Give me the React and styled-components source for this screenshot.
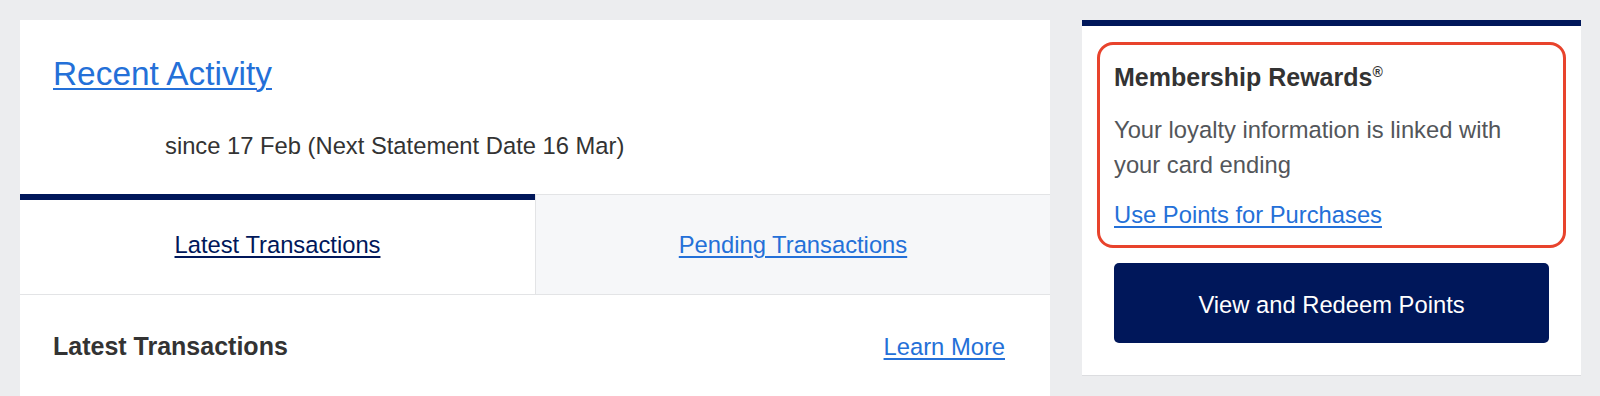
import React from "react";
import styled, { createGlobalStyle } from "styled-components";

const NAVY = "#00175a";
const LINK = "#2470d8";
const BORDER = "#e3e4e6";

const Global = createGlobalStyle`
  html, body { margin: 0; padding: 0; background: #ecedef; overflow: hidden; }
  body { font-family: "Liberation Sans", Arial, "Helvetica Neue", sans-serif; }
  * { box-sizing: border-box; }
`;

const Page = styled.div`
  display: grid;
  grid-template-columns: 1030px 499px;
  column-gap: 32px;
  padding: 20px 19px 0 20px;
  height: 100vh;
  overflow: hidden;
`;

const MainPanel = styled.section`
  background: #ffffff;
  align-self: stretch;
`;

const Header = styled.div`
  padding: 34px 33px 32px;
`;

const TitleLink = styled.a`
  display: inline-block;
  font-size: 33.4px;
  line-height: 40px;
  color: ${LINK};
  text-decoration: underline;
  text-decoration-thickness: 1.5px;
  text-underline-offset: 3px;
  cursor: pointer;
`;

const Subtitle = styled.p`
  margin: 36px 0 0 112px;
  font-size: 23.75px;
  line-height: 32px;
  color: #333333;
`;

const Tabs = styled.div`
  display: grid;
  grid-template-columns: 1fr 1fr;
`;

const Tab = styled.div`
  height: 101px;
  display: flex;
  justify-content: center;
  align-items: flex-start;
  padding-top: ${(p) => (p.$active ? "29px" : "34px")};
  background: ${(p) => (p.$active ? "#ffffff" : "#f6f7f9")};
  border-top: ${(p) => (p.$active ? `6px solid ${NAVY}` : `1px solid ${BORDER}`)};
  border-left: ${(p) => (p.$active ? "none" : `1px solid ${BORDER}`)};
  border-bottom: 1px solid ${BORDER};
`;

const TabLink = styled.a`
  font-size: 23.75px;
  line-height: 32px;
  color: ${(p) => (p.$active ? NAVY : LINK)};
  text-decoration: underline;
  text-decoration-thickness: ${(p) => (p.$active ? "2px" : "1.5px")};
  text-underline-offset: 3px;
  cursor: pointer;
`;

const SectionHead = styled.div`
  display: flex;
  justify-content: space-between;
  align-items: baseline;
  padding: 35px 45px 0 33px;
`;

const SectionTitle = styled.h2`
  margin: 0;
  font-size: 25px;
  line-height: 32px;
  font-weight: 700;
  color: #333333;
`;

const TextLink = styled.a`
  font-size: 23.75px;
  line-height: ${(p) => p.$lh || "32px"};
  color: ${LINK};
  text-decoration: underline;
  text-decoration-thickness: 1.5px;
  text-underline-offset: 3px;
  cursor: pointer;
`;

const SidePanel = styled.aside`
  align-self: start;
  background: #ffffff;
  border-top: 6px solid ${NAVY};
  border-bottom: 1px solid #dcdde0;
  padding: 0 32px 32px;
  display: flex;
  flex-direction: column;
`;

const Highlight = styled.div`
  margin: 16px -17px 0;
  border: 3px solid #e8432c;
  border-radius: 16px;
  padding: 16px 14px 13px;
  display: flex;
  flex-direction: column;
  align-items: flex-start;
`;

const CardTitle = styled.h3`
  margin: 0;
  font-size: 25px;
  line-height: 32px;
  font-weight: 700;
  color: #333333;
`;

const Reg = styled.span`
  font-size: 14px;
  font-weight: 700;
  vertical-align: 9px;
  line-height: 0;
`;

const CardText = styled.p`
  margin: 19px 0 0;
  font-size: 23.75px;
  line-height: 35px;
  color: #53565a;
`;

const LinkRow = styled.div`
  margin-top: 15px;
`;

const PrimaryButton = styled.button`
  margin-top: 15px;
  height: 80px;
  width: 100%;
  border: none;
  border-radius: 5px;
  background: ${NAVY};
  color: #ffffff;
  font-family: inherit;
  font-size: 23.75px;
  line-height: 32px;
  cursor: pointer;
  padding: 4px 0 0;
`;

export default function App() {
  return (
    <>
      <Global />
      <Page>
        <MainPanel>
          <Header>
            <TitleLink>Recent Activity</TitleLink>
            <Subtitle>since 17 Feb (Next Statement Date 16 Mar)</Subtitle>
          </Header>
          <Tabs>
            <Tab $active>
              <TabLink $active>Latest Transactions</TabLink>
            </Tab>
            <Tab>
              <TabLink>Pending Transactions</TabLink>
            </Tab>
          </Tabs>
          <SectionHead>
            <SectionTitle>Latest Transactions</SectionTitle>
            <TextLink>Learn More</TextLink>
          </SectionHead>
        </MainPanel>
        <SidePanel>
          <Highlight>
            <CardTitle>
              Membership Rewards<Reg>®</Reg>
            </CardTitle>
            <CardText>Your loyalty information is linked with your card ending</CardText>
            <LinkRow>
              <TextLink $lh="35px">Use Points for Purchases</TextLink>
            </LinkRow>
          </Highlight>
          <PrimaryButton>View and Redeem Points</PrimaryButton>
        </SidePanel>
      </Page>
    </>
  );
}
